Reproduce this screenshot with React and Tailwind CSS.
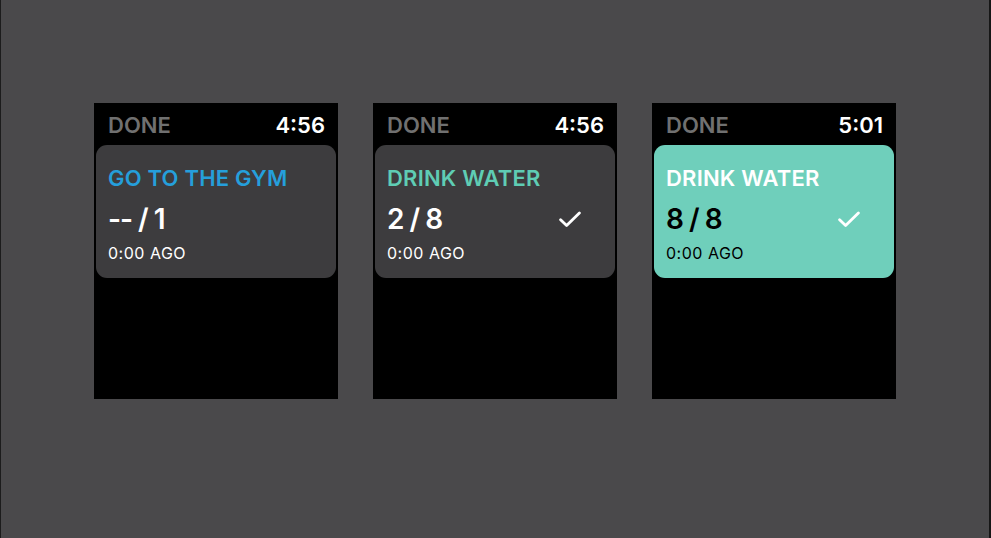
import React from 'react';

const screens = [
    { time: '4:56', title: 'GO TO THE GYM', count: '-- / 1', ago: '0:00 AGO', variant: 'blue', check: false },
    { time: '4:56', title: 'DRINK WATER', count: '2 / 8', ago: '0:00 AGO', variant: 'dark', check: true },
    { time: '5:01', title: 'DRINK WATER', count: '8 / 8', ago: '0:00 AGO', variant: 'done', check: true },
];

function Check() {
    return (
        <svg width="22" height="17" viewBox="0 0 22 17" fill="none">
            <path d="M1.6 8.8 L7.6 14.6 L20.4 2" stroke="white" strokeWidth="2.8" strokeLinecap="round" strokeLinejoin="round" />
        </svg>
    );
}

function WatchScreen({ s }) {
    const cardClass = s.variant === 'done' ? 'bg-[#6fcfbb]' : 'bg-[#3d3c3e]';
    const titleClass =
        s.variant === 'blue' ? 'text-[#259fdb]' : s.variant === 'dark' ? 'text-[#5fcdb4]' : 'text-white';
    const textClass = s.variant === 'done' ? 'text-black' : 'text-white';

    return (
        <div className="w-[244px] h-[296px] bg-black flex flex-col px-[2px]">
            <div className="h-[42px] flex items-center justify-between pl-[12px] pr-[11px] pt-[2px] font-semibold text-[22px]">
                <span className="text-[#707070]">DONE</span>
                <span className="text-white">{s.time}</span>
            </div>
            <div className={`${cardClass} rounded-[11px] h-[133px] px-[12px] pt-[20px]`}>
                <div className={`${titleClass} text-[22px] font-semibold leading-[26px] tracking-[0.2px]`}>{s.title}</div>
                <div className="flex items-center justify-between mt-[12px] h-[32px]">
                    <span className={`${textClass} text-[28px] font-semibold leading-[32px] tracking-[-1px]`}>{s.count}</span>
                    {s.check && <span className="mr-[22px] flex"><Check /></span>}
                </div>
                <div className={`${textClass} text-[16px] leading-[20px] mt-[8px] tracking-[0.5px]`}>{s.ago}</div>
            </div>
        </div>
    );
}

export default function App() {
    return (
        <div
            className="w-[991px] h-[538px] bg-[#4a494b] flex pl-[93px] pt-[103px] border-l border-[#1c1c1c] border-r-2 border-r-[#161616]"
            style={{ fontFamily: 'Inter, "Noto Sans", sans-serif' }}
        >
            <div className="flex gap-[35px] h-[296px]">
                {screens.map((s, i) => (
                    <WatchScreen key={i} s={s} />
                ))}
            </div>
        </div>
    );
}
